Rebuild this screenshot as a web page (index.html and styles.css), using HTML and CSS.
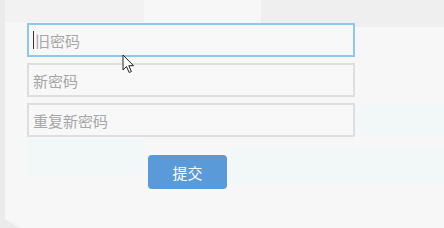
FILE: index.html
```html
<!DOCTYPE html>
<html lang="zh">
<head>
<meta charset="utf-8">
<link rel="stylesheet" href="styles.css">
</head>
<body>
<div class="page">
  <div class="top-band"></div>
  <div class="top-band-right"></div>
  <div class="left-strip"></div>
  <div class="tint tint-a"></div>
  <div class="tint tint-b"></div>
  <div class="tint tint-c"></div>
  <form class="form">
    <div class="field focused"><span class="caret"></span><span class="ph">旧密码</span></div>
    <div class="field"><span class="ph">新密码</span></div>
    <div class="field"><span class="ph">重复新密码</span></div>
    <div class="actions"><button type="button" class="submit">提交</button></div>
  </form>
  <svg class="pointer" width="14" height="22" viewBox="0 0 14 22">
    <path d="M1 1 L1 16 L4.5 12.5 L7.2 18.5 L9.4 17.5 L6.8 11.7 L11.5 11.7 Z" fill="#fff" stroke="#222" stroke-width="1" stroke-linejoin="round"/>
  </svg>
</div>
</body>
</html>
```
FILE: styles.css
```css
html, body {
  margin: 0;
  padding: 0;
  background: #f7f7f7;
  font-family: "Noto Sans CJK SC", "Liberation Sans", sans-serif;
}
.page {
  position: relative;
  width: 444px;
  height: 228px;
  overflow: hidden;
}
.top-band {
  position: absolute;
  left: 0;
  top: 0;
  width: 144px;
  height: 22px;
  background: #f2f2f2;
}
.top-band-right {
  position: absolute;
  left: 261px;
  top: 0;
  width: 183px;
  height: 27px;
  background: #efefef;
}
.left-strip {
  position: absolute;
  left: 0;
  top: 0;
  width: 20px;
  height: 228px;
  background: #ebebeb;
  clip-path: polygon(0 0, 25% 0, 25% 96%, 100% 100%, 0 100%);
}
.tint {
  position: absolute;
  background: #f2f7f7;
}
.tint-a {
  left: 27px;
  top: 138px;
  width: 117px;
  height: 36px;
}
.tint-b {
  left: 230px;
  top: 148px;
  width: 214px;
  height: 36px;
}
.tint-c {
  left: 262px;
  top: 105px;
  width: 182px;
  height: 32px;
}
.form {
  position: relative;
  display: flex;
  flex-direction: column;
  gap: 6px;
  padding: 23px 0 0 27px;
  margin: 0;
}
.field {
  box-sizing: border-box;
  width: 328px;
  height: 34px;
  border: 2px solid #dedede;
  background: #f8f8f8;
  display: flex;
  align-items: center;
  padding-left: 4px;
}
.field.focused {
  border-color: #8fc8ee;
}
.caret {
  width: 1px;
  height: 18px;
  background: #333;
  margin-right: 1px;
}
.ph {
  color: #a6a6a6;
  font-size: 15px;
}
.actions {
  display: flex;
  padding-left: 121px;
  padding-top: 12px;
}
.submit {
  width: 79px;
  height: 34px;
  border: none;
  border-radius: 4px;
  background: #5b9ad8;
  color: #fff;
  font-family: "Noto Sans CJK SC", sans-serif;
  font-size: 15px;
  padding: 0;
}
.pointer {
  position: absolute;
  left: 122px;
  top: 54px;
}
```
